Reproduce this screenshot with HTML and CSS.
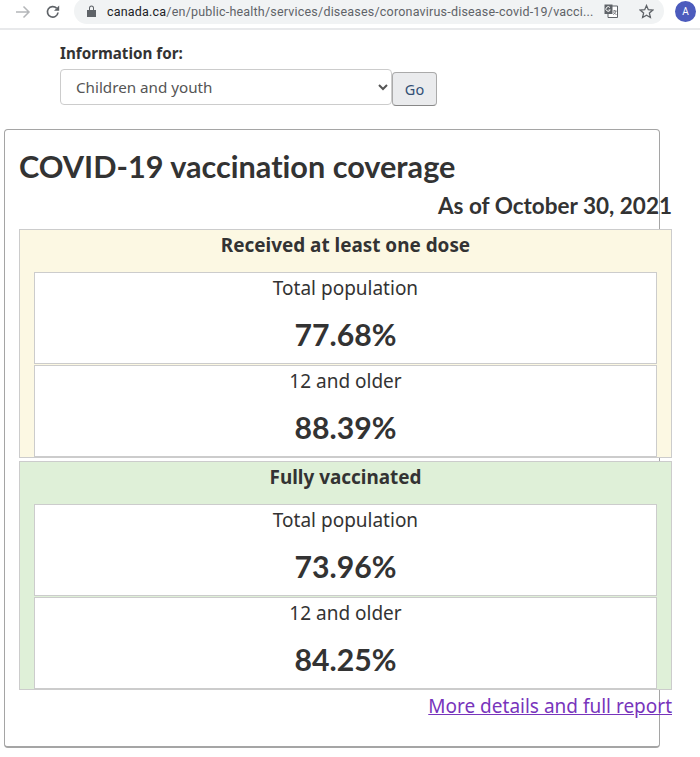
FILE: index.html
```html
<!DOCTYPE html>
<html lang="en">
<head>
<meta charset="utf-8">
<title>COVID-19 vaccination coverage</title>
<link rel="stylesheet" href="styles.css">
</head>
<body>
<header class="toolbar">
  <svg class="nav-icon" width="16" height="16" viewBox="0 0 16 16"><path d="M1 8h13M8.500 2.500 14 8l-5.500 5.500" fill="none" stroke="#b4b6b9" stroke-width="1.500"/></svg>
  <svg class="nav-icon reload" width="16" height="16" viewBox="0 0 16 16"><path d="M13 8.500A5.300 5.300 0 1 1 11.600 4.200" fill="none" stroke="#5f6368" stroke-width="1.700"/><path d="M14.200 1.500v5.200H9z" fill="#5f6368"/></svg>
  <div class="omnibox">
    <svg class="lock" width="9" height="12" viewBox="0 0 9 12"><path d="M0 5h9v7H0zM2 5V3a2.500 2.500 0 0 1 5 0v2" fill="#5f6368"/><path d="M3 5V3a1.500 1.500 0 0 1 3 0v2z" fill="#f1f3f4"/></svg>
    <span class="url"><span class="host">canada.ca</span>/en/public-health/services/diseases/coronavirus-disease-covid-19/vacci...</span>
    <svg class="translate" width="14" height="14" viewBox="0 0 14 14"><path d="M4 2h9.500v11.500H4z" fill="#fff" stroke="#5f6368"/><path d="M.5.500h8v9.500h-8z" fill="#5f6368"/><path d="M6 3.500A2.300 2.300 0 1 0 6.300 6H4.500" fill="none" stroke="#fff"/><path d="M9 7h3.500M10.700 6v1M12 7c-.5 2-1.700 3-3 3.500M9.500 8c.5 1 1.500 2 3 2.500" fill="none" stroke="#5f6368" stroke-width=".8"/></svg>
    <svg class="star" width="15" height="15" viewBox="0 0 15 15"><path d="M7.500 1.500 9.300 5.700l4.500.4-3.400 3 1 4.400-3.900-2.300-3.900 2.300 1-4.400-3.400-3 4.500-.4z" fill="none" stroke="#5f6368" stroke-width="1.300"/></svg>
  </div>
  <div class="avatar">A</div>
</header>

<main class="page">
  <form class="audience">
    <label class="audience-label" for="aud">Information for:</label>
    <div class="audience-row">
      <select class="audience-select" id="aud"><option>Children and youth</option></select>
      <button class="go" type="button">Go</button>
    </div>
  </form>

  <section class="card">
    <h2 class="title">COVID-19 vaccination coverage</h2>
    <p class="asof">As of October 30, 2021</p>

    <div class="group group-one">
      <h3 class="group-title">Received at least one dose</h3>
      <div class="stat"><p class="stat-label">Total population</p><p class="stat-value">77.68%</p></div>
      <div class="stat"><p class="stat-label">12 and older</p><p class="stat-value">88.39%</p></div>
    </div>

    <div class="group group-full">
      <h3 class="group-title">Fully vaccinated</h3>
      <div class="stat"><p class="stat-label">Total population</p><p class="stat-value">73.96%</p></div>
      <div class="stat"><p class="stat-label">12 and older</p><p class="stat-value">84.25%</p></div>
    </div>

    <p class="more"><a class="more-link" href="#">More details and full report</a></p>
  </section>
</main>
</body>
</html>
```

FILE: styles.css
```css
* { box-sizing: border-box; }
html, body { margin: 0; padding: 0; }
body {
  width: 700px;
  height: 757px;
  overflow: hidden;
  background: #fff;
  color: #333;
  font-family: "Noto Sans", "Open Sans", sans-serif;
}

.toolbar {
  height: 30px;
  display: flex;
  align-items: center;
  padding: 0 0 4px 15px;
  border-bottom: 2px solid #e8e9eb;
  background: #fff;
}
.nav-icon { flex: none; }
.reload { margin-left: 14px; }
.omnibox {
  flex: none;
  width: 590px;
  height: 26px;
  margin: -2px 0 0 13px;
  padding: 0 8px 0 12px;
  display: flex;
  align-items: center;
  background: #f1f3f4;
  border-radius: 13px;
}
.lock { flex: none; margin-left: 1px; }
.url {
  flex: none;
  margin-left: 11px;
  width: 490px;
  white-space: nowrap;
  overflow: hidden;
  font: 12.500px "Roboto", sans-serif;
  letter-spacing: .2px;
  color: #5f6368;
}
.host { color: #202124; }
.translate { flex: none; margin-left: 7px; }
.star { flex: none; margin-left: 21px; }
.avatar {
  flex: none;
  width: 21px;
  height: 21px;
  margin-left: 11px;
  margin-top: -2px;
  border-radius: 50%;
  background: #4c5bbd;
  color: #fff;
  font: 10px/21px "Roboto", sans-serif;
  text-align: center;
}

.page { padding: 13px 28px 0 4px; }

.audience { padding-left: 56px; }
.audience-label {
  display: block;
  font-size: 15.200px;
  font-weight: 700;
  line-height: 20px;
  color: #333;
}
.audience-row {
  display: flex;
  align-items: flex-start;
  margin-top: 6px;
}
.audience-select {
  width: 332px;
  height: 36px;
  padding: 0 11px;
  background: #fff;
  border: 1px solid #ccc;
  border-radius: 4px;
  color: #555;
  font: 15.200px "Noto Sans", sans-serif;
}
.go {
  width: 45px;
  height: 34px;
  margin: 3px 0 0;
  background: #eaebed;
  border: 1px solid #aaa;
  border-bottom-color: #888;
  border-radius: 4px;
  color: #335075;
  font: 14.500px "Noto Sans", sans-serif;
}

.card {
  width: 656px;
  height: 619px;
  margin-top: 23px;
  margin-right: -40px;
  padding: 16px 14px 0;
  border: 1px solid #a5a5a5;
  border-bottom-width: 2px;
  border-radius: 4px;
}
.title {
  margin: 0;
  font: 700 30.650px/41px "Lato", sans-serif;
  font-variant-ligatures: none;
  color: #333;
}
.asof {
  margin: 0;
  width: 653px;
  text-align: right;
  font: 700 22.500px/37px "Lato", sans-serif;
  font-variant-ligatures: none;
  color: #333;
}
.group {
  width: 653px;
  height: 229px;
  padding: 0 14px;
  border: 1px solid #ccc;
}
.group-one { background: #fcf8e3; margin-top: 5px; }
.group-full { background: #dff0d8; margin-top: 3px; }
.group-title {
  margin: 0;
  height: 42px;
  font: 700 18.900px/31px "Noto Sans", sans-serif;
  text-align: center;
  color: #333;
}
.stat {
  height: 92px;
  margin-bottom: 1px;
  background: #fff;
  border: 1px solid #ccc;
  text-align: center;
}
.stat-label {
  margin: 0;
  padding-top: 2px;
  font: 400 19px/26px "Noto Sans", sans-serif;
  color: #333;
}
.stat-value {
  margin: 0;
  padding-top: 11px;
  font: 700 30.200px/44px "Lato", sans-serif;
  color: #333;
}
.more {
  margin: 0;
  width: 653px;
  text-align: right;
  font-size: 19px;
  line-height: 24px;
  padding-top: 4px;
}
.more-link { color: #7834bc; text-decoration: underline; }
```
